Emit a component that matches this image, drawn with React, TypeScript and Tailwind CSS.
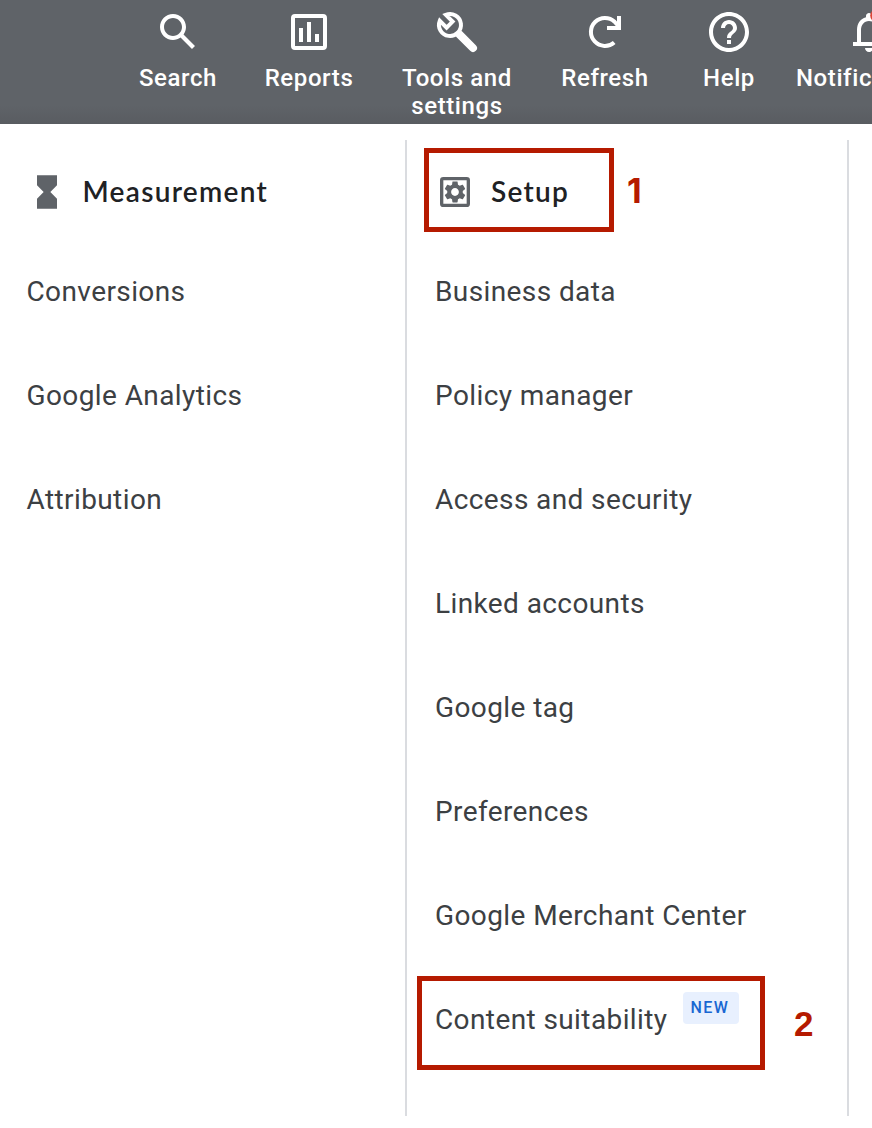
import type { ReactNode } from "react";

type ToolbarItem = {
    label: string;
    width: string;
    icon: ReactNode;
};

const toolbar: ToolbarItem[] = [
    {
        label: "Search",
        width: "w-[126px]",
        icon: <path d="M20.49 19l-5.73-5.73C15.53 12.2 16 10.91 16 9.5 16 5.91 13.09 3 9.5 3S3 5.91 3 9.5 5.91 16 9.5 16c1.41 0 2.7-.47 3.77-1.24L19 20.49 20.49 19zM5 9.5C5 7.01 7.01 5 9.5 5S14 7.01 14 9.5 11.99 14 9.5 14 5 11.99 5 9.5z" />,
    },
    {
        label: "Reports",
        width: "w-[136px]",
        icon: <path d="M19 3H5a2 2 0 0 0-2 2v14a2 2 0 0 0 2 2h14a2 2 0 0 0 2-2V5a2 2 0 0 0-2-2zm0 16H5V5h14v14zM7 10h2v7H7zM11 7h2v10h-2zM15 13h2v4h-2z" />,
    },
    {
        label: "Tools and settings",
        width: "w-[160px]",
        icon: (
            <g fill="none" stroke="currentColor" strokeWidth="2">
                <path d="M3.4 6.4A5.5 5.5 0 1 0 6.4 3.4L9.8 6.8 6.8 9.8z" />
                <path d="M13.2 13.2L20 20" strokeWidth="4" strokeLinecap="round" />
            </g>
        ),
    },
    {
        label: "Refresh",
        width: "w-[136px]",
        icon: (
            <>
                <path d="M16.6 17.2A7 7 0 1 1 16.8 6.9L19 9.4" fill="none" stroke="currentColor" strokeWidth="2" />
                <path d="M20 4v7h-7V9h5V4z" />
            </>
        ),
    },
    {
        label: "Help",
        width: "w-[112px]",
        icon: <path d="M11 18h2v-2h-2v2zm1-16C6.48 2 2 6.48 2 12s4.48 10 10 10 10-4.48 10-10S17.52 2 12 2zm0 18c-4.41 0-8-3.59-8-8s3.59-8 8-8 8 3.59 8 8-3.59 8-8 8zm0-14c-2.21 0-4 1.79-4 4h2c0-1.1.9-2 2-2s2 .9 2 2c0 2-3 1.75-3 5h2c0-2.25 3-2.5 3-5 0-2.21-1.79-4-4-4z" />,
    },
    {
        label: "Notifications",
        width: "w-[168px]",
        icon: (
            <>
                <path
                    fillRule="evenodd"
                    d="M12 22c1.1 0 2-.9 2-2h-4c0 1.1.9 2 2 2zM18 17v-6c0-3.07-1.63-5.64-4.5-6.32V4c0-.83-.67-1.5-1.5-1.5s-1.5.67-1.5 1.5v.68C7.64 5.36 6 7.92 6 11v6H4v2h16v-2zM16 17H8v-6c0-2.48 1.51-4.5 4-4.5s4 2.02 4 4.5z"
                />
                <circle cx="16" cy="3.8" r="3.4" className="fill-[#db4437]" />
            </>
        ),
    },
];

const measurement = ["Conversions", "Google Analytics", "Attribution"];

const setup = [
    "Business data",
    "Policy manager",
    "Access and security",
    "Linked accounts",
    "Google tag",
    "Preferences",
    "Google Merchant Center",
    "Content suitability",
];

const Hourglass = () => (
    <svg viewBox="0 0 24 24" className="size-10 fill-[#5f6368]">
        <path d="M6 2v6h.01L6 8.01 10 12l-4 4 .01.01H6V22h12v-5.99h-.01L18 16l-4-4 4-3.99-.01-.01H18V2H6z" />
    </svg>
);

const SetupGear = () => (
    <svg viewBox="0 0 24 24" className="size-10 fill-[#5f6368]">
        <path d="M19 3H5a2 2 0 0 0-2 2v14a2 2 0 0 0 2 2h14a2 2 0 0 0 2-2V5a2 2 0 0 0-2-2zm0 16H5V5h14v14z" />
        <path
            transform="translate(12 12) scale(.65) translate(-12 -12)"
            d="M19.14 12.94c.04-.3.06-.61.06-.94 0-.32-.02-.64-.07-.94l2.03-1.58c.18-.14.23-.41.12-.61l-1.92-3.32c-.12-.22-.37-.29-.59-.22l-2.39.96c-.5-.38-1.03-.7-1.62-.94l-.36-2.54c-.04-.24-.24-.41-.48-.41h-3.84c-.24 0-.43.17-.47.41l-.36 2.54c-.59.24-1.13.57-1.62.94l-2.39-.96c-.22-.08-.47 0-.59.22L2.74 8.87c-.12.21-.08.47.12.61l2.03 1.58c-.05.3-.09.63-.09.94s.02.64.07.94l-2.03 1.58c-.18.14-.23.41-.12.61l1.92 3.32c.12.22.37.29.59.22l2.39-.96c.5.38 1.03.7 1.62.94l.36 2.54c.05.24.24.41.48.41h3.84c.24 0 .44-.17.47-.41l.36-2.54c.59-.24 1.13-.56 1.62-.94l2.39.96c.22.08.47 0 .59-.22l1.92-3.32c.12-.22.07-.47-.12-.61l-2.01-1.58zM12 15.6c-1.98 0-3.6-1.62-3.6-3.6s1.62-3.6 3.6-3.6 3.6 1.62 3.6 3.6-1.62 3.6-3.6 3.6z"
        />
    </svg>
);

const Heading = ({ icon, label }: { icon: ReactNode; label: string }) => (
    <h2 className="flex h-[100px] items-center gap-4 pt-1 text-[#202124]">
        {icon}
        <span className="pb-0.5 font-['Lato',sans-serif] text-[28px] font-semibold tracking-[1.3px]">{label}</span>
    </h2>
);

const MenuItem = ({ label }: { label: string }) => (
    <li className="flex h-[104px] items-center gap-4 text-[28px] tracking-[0.4px] whitespace-nowrap">
        {label}
        {label === "Content suitability" && (
            <span className="mb-6 flex h-8 w-14 items-center rounded bg-[#e8f0fe] pl-[7px] text-base font-medium tracking-[1.4px] text-[#1967d2]">
                NEW
            </span>
        )}
    </li>
);

export default function App() {
    return (
        <div className="relative h-[1128px] w-[872px] overflow-hidden bg-white font-['Roboto',sans-serif] text-[#3c4043]">
            <header className="h-[124px] overflow-hidden bg-[#5f6368] bg-linear-to-b from-[#5f6368] from-85% to-[#595c61] pl-[115px] text-white">
                <div className="flex w-max pt-2">
                    {toolbar.map((item) => (
                        <button key={item.label} className={"flex shrink-0 flex-col items-center " + item.width}>
                            <svg viewBox="0 0 24 24" fill="currentColor" className="size-12">
                                {item.icon}
                            </svg>
                            <span className="mt-2 max-w-[156px] text-center text-2xl leading-7 font-medium tracking-[0.6px]">
                                {item.label}
                            </span>
                        </button>
                    ))}
                </div>
            </header>

            <main className="flex h-[992px] pt-4">
                <section className="w-[405px] pl-[26.5px]">
                    <Heading icon={<Hourglass />} label="Measurement" />
                    <ul>
                        {measurement.map((label) => <MenuItem key={label} label={label} />)}
                    </ul>
                </section>
                <section className="w-[444px] border-x-2 border-[#dadce0] pl-7">
                    <Heading icon={<SetupGear />} label="Setup" />
                    <ul>
                        {setup.map((label) => <MenuItem key={label} label={label} />)}
                    </ul>
                </section>
            </main>

            {/* step markers drawn over the menu */}
            <div className="pointer-events-none text-[35px] leading-none font-bold text-[#b51a00]">
                <div className="absolute top-[148px] left-[424px] h-[84px] w-[190px] border-5 border-[#b51a00]" />
                <span className="absolute top-[174px] left-[627px] font-['Inter',sans-serif] text-[34px]">1</span>
                <div className="absolute top-[976px] left-[417px] h-[94px] w-[348px] border-5 border-[#b51a00]" />
                <span className="absolute top-[1006px] left-[794px] font-['Liberation_Sans',sans-serif]">2</span>
            </div>
        </div>
    );
}
